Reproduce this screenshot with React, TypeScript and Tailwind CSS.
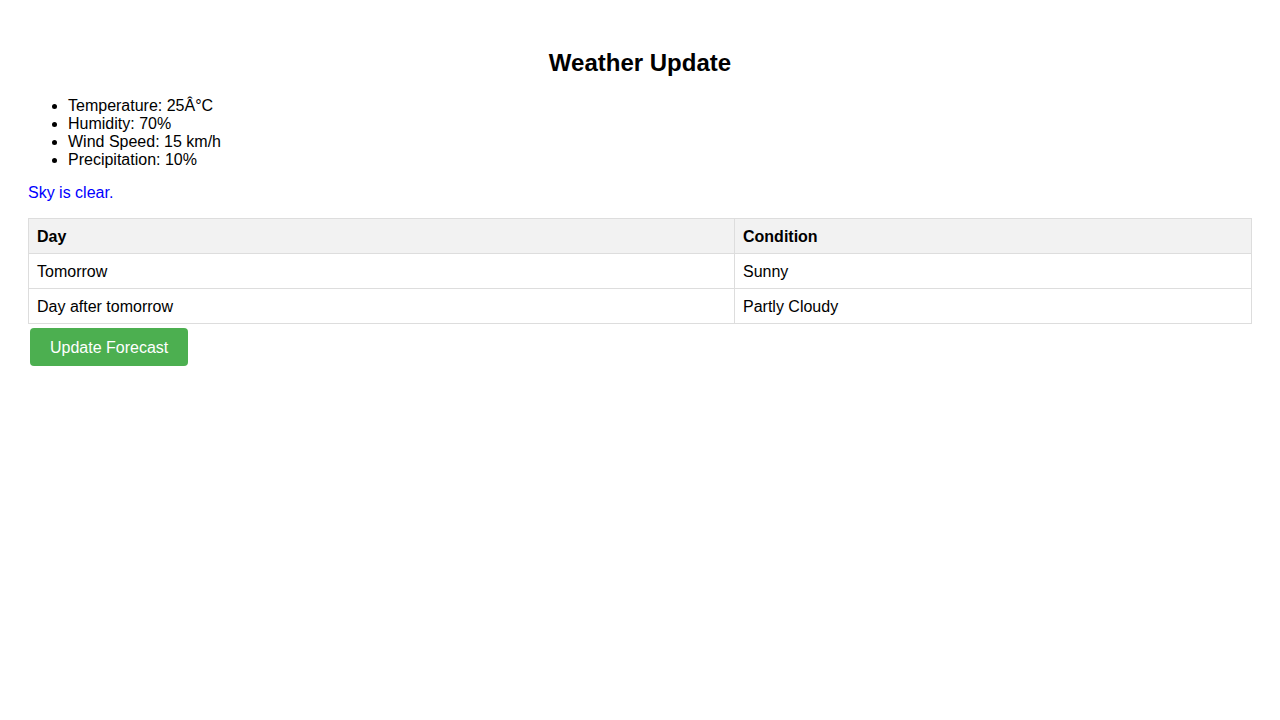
// Weather update page: heading, current readings, forecast table.
const readings = [
  "Temperature: 25Â°C",
  "Humidity: 70%",
  "Wind Speed: 15 km/h",
  "Precipitation: 10%",
];

const forecast = [
  { day: "Tomorrow", condition: "Sunny" },
  { day: "Day after tomorrow", condition: "Partly Cloudy" },
];

export default function App() {
  return (
    <div className="min-h-screen bg-white p-[28px] font-['Liberation_Sans',Arial,sans-serif] text-[16px] leading-[18px] text-black">
      <h1 className="mt-[21px] mb-[20px] text-center text-[24px] leading-[28px] font-bold">Weather Update</h1>

      <ul className="mb-[15px] list-disc pl-[40px]">
        {readings.map((r) => (
          <li key={r}>{r}</li>
        ))}
      </ul>

      <p className="mb-[16px] text-[#0000ff]">Sky is clear.</p>

      <table className="w-full border-collapse border border-[#dddddd]">
        <thead>
          <tr className="bg-[#f2f2f2]">
            <th className="w-[706px] border border-[#dddddd] px-[8px] pt-[9px] pb-[7px] text-left font-bold">Day</th>
            <th className="border border-[#dddddd] px-[8px] pt-[9px] pb-[7px] text-left font-bold">Condition</th>
          </tr>
        </thead>
        <tbody>
          {forecast.map((f) => (
            <tr key={f.day}>
              <td className="border border-[#dddddd] px-[8px] pt-[9px] pb-[7px]">{f.day}</td>
              <td className="border border-[#dddddd] px-[8px] pt-[9px] pb-[7px]">{f.condition}</td>
            </tr>
          ))}
        </tbody>
      </table>

      <button className="mt-[4px] ml-[2px] rounded-[4px] bg-[#4caf50] px-[20px] pt-[11px] pb-[9px] text-[16px] leading-[18px] text-white">
        Update Forecast
      </button>
    </div>
  );
}
